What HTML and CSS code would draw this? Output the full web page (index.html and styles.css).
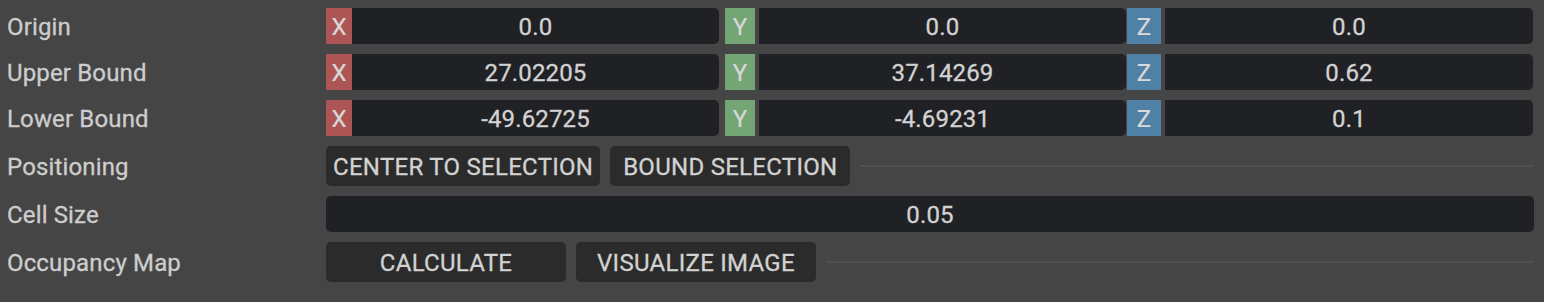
FILE: index.html
```html
<!DOCTYPE html>
<html>
<head>
<meta charset="utf-8">
<link rel="stylesheet" href="styles.css">
</head>
<body>
<div class="panel">
  <div class="row">
    <div class="label">Origin</div>
    <div class="control vec">
      <span class="badge bx">X</span><span class="field">0.0</span>
      <span class="badge by">Y</span><span class="field">0.0</span>
      <span class="badge bz">Z</span><span class="field">0.0</span>
    </div>
  </div>
  <div class="row">
    <div class="label">Upper Bound</div>
    <div class="control vec">
      <span class="badge bx">X</span><span class="field">27.02205</span>
      <span class="badge by">Y</span><span class="field">37.14269</span>
      <span class="badge bz">Z</span><span class="field">0.62</span>
    </div>
  </div>
  <div class="row">
    <div class="label">Lower Bound</div>
    <div class="control vec">
      <span class="badge bx">X</span><span class="field">-49.62725</span>
      <span class="badge by">Y</span><span class="field">-4.69231</span>
      <span class="badge bz">Z</span><span class="field">0.1</span>
    </div>
  </div>
  <div class="row tall">
    <div class="label">Positioning</div>
    <div class="control btns">
      <button class="btn">CENTER TO SELECTION</button>
      <button class="btn">BOUND SELECTION</button>
      <div class="rule"></div>
    </div>
  </div>
  <div class="row">
    <div class="label">Cell Size</div>
    <div class="control">
      <span class="field single">0.05</span>
    </div>
  </div>
  <div class="row tall">
    <div class="label">Occupancy Map</div>
    <div class="control btns">
      <button class="btn">CALCULATE</button>
      <button class="btn">VISUALIZE IMAGE</button>
      <div class="rule"></div>
    </div>
  </div>
</div>
</body>
</html>
```

FILE: styles.css
```css
html, body {
  margin: 0;
  padding: 0;
  background: #454545;
}
body {
  font-family: Roboto, "Noto Sans", sans-serif;
  font-size: 24px;
  font-weight: 400;
  letter-spacing: 0.15px;
  -webkit-text-stroke: 0.3px currentColor;
  color: #cfcfcf;
  width: 1544px;
  height: 302px;
  overflow: hidden;
}
.panel {
  display: flex;
  flex-direction: column;
  gap: 10px;
  padding: 8px 10px 0 7px;
}
.row {
  display: flex;
  align-items: stretch;
  height: 36px;
}
.row.tall {
  height: 40px;
}
.label {
  width: 319px;
  flex: none;
  display: flex;
  align-items: center;
  padding-top: 2px;
  box-sizing: border-box;
  color: #cdcdcd;
}
.control {
  flex: 1;
  display: flex;
  align-items: stretch;
}
.badge {
  flex: none;
  display: flex;
  align-items: center;
  justify-content: center;
  padding-top: 2px;
  box-sizing: border-box;
  color: #d8d8d8;
  -webkit-text-stroke: 0.2px currentColor;
}
.bx { width: 26px; background: #ad5555; }
.by { width: 30px; background: #74a574; margin-left: 6px; margin-right: 4px; }
.bz { width: 34px; background: #4f80a6; margin-left: 1px; margin-right: 4px; }
.field {
  flex: 1;
  background: #202124;
  border-radius: 0 5px 5px 0;
  display: flex;
  align-items: center;
  justify-content: center;
  padding-top: 2px;
  box-sizing: border-box;
  color: #d2d2d2;
}
.vec .field:last-child { flex: 0 0 368px; }
.vec .field { flex: 0 0 367px; }
.field.single {
  border-radius: 5px;
}
.btns {
  gap: 10px;
  align-items: center;
}
.btn {
  height: 40px;
  min-width: 240px;
  padding: 2px 7px 0;
  border: none;
  border-radius: 5px;
  background: #2b2b2b;
  color: #d2d2d2;
  font-family: inherit;
  font-weight: 400;
  font-size: 24px;
  letter-spacing: 0.28px;
  -webkit-text-stroke: 0.3px currentColor;
  flex: none;
}
.rule {
  flex: 1;
  height: 2px;
  background: #505050;
}
```
